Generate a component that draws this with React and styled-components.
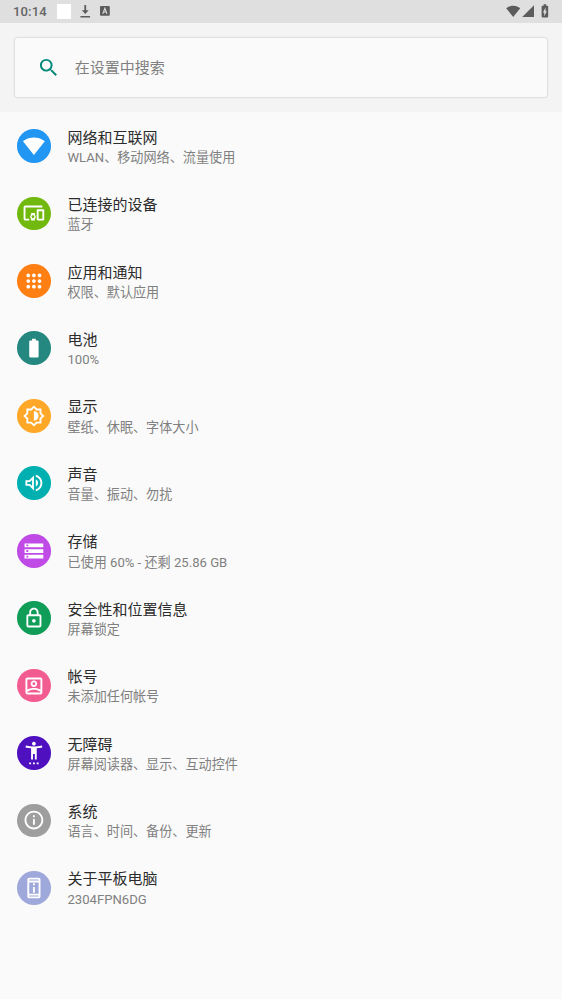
import React from "react";
import styled, { createGlobalStyle } from "styled-components";

const GlobalStyle = createGlobalStyle`
  * { box-sizing: border-box; }
  html, body { margin: 0; background: #fafafa; }
  body { font-family: Roboto, "Noto Sans CJK SC", sans-serif; overflow: hidden; }
`;

const Screen = styled.div`
  width: 562px;
  height: 999px;
  background: #fafafa;
  overflow: hidden;
`;

const StatusBar = styled.header`
  height: 22.5px;
  padding: 0 9.7px 0 13px;
  display: flex;
  align-items: center;
  justify-content: space-between;
  background: #dfdfdf;
  color: #5c5c5c;
`;

const StatusGroup = styled.div`
  display: flex;
  align-items: center;
  height: 100%;
`;

const Clock = styled.span`
  width: 44px;
  padding-top: 1px;
  font-size: 13.1px;
  font-weight: 500;
  line-height: 22px;
  letter-spacing: 0.1px;
  color: #666;
`;

const BlankNotice = styled.span`
  width: 14px;
  height: 14.5px;
  background: #fff;
`;

const Glyph = styled.svg`
  display: block;
  flex: none;
  width: ${(p) => p.$size}px;
  height: ${(p) => p.$size}px;
  margin-left: ${(p) => p.$gap || 0}px;
  fill: ${(p) => p.$color || "currentColor"};
`;

const SearchPanel = styled.div`
  height: 89.5px;
  padding: 15px 14.6px 14.5px 15px;
  background: #f4f4f4;
`;

const SearchCard = styled.div`
  height: 59.5px;
  padding-left: 21.8px;
  display: flex;
  align-items: center;
  gap: 14.6px;
  border-radius: 2px;
  background: #fafafa;
  box-shadow: 0 0 2px rgba(0, 0, 0, 0.3);
`;

const SearchHint = styled.span`
  padding-top: 1.4px;
  font-size: 15px;
  line-height: 22px;
  color: #808080;
`;

const List = styled.ul`
  list-style: none;
  margin: 0;
  padding: 0.3px 0 0;
`;

const Row = styled.li`
  height: 67.45px;
  padding-left: 16.9px;
  display: flex;
  align-items: center;
  gap: 16.8px;
`;

const Badge = styled.span`
  width: 33.75px;
  height: 33.75px;
  flex: none;
  display: flex;
  align-items: center;
  justify-content: center;
  border-radius: 50%;
  background: ${(p) => p.$color};
`;

const Labels = styled.div`
  display: flex;
  flex-direction: column;
  padding-top: 2.6px;
`;

const Title = styled.span`
  font-size: 15px;
  line-height: 20px;
  color: #2c2c2c;
`;

const Summary = styled.span`
  margin-top: 0.3px;
  font-size: 13.125px;
  line-height: 19px;
  color: #808080;
`;

const paths = {
  search: "M15.5 14h-.79l-.28-.27A6.471 6.471 0 0 0 16 9.5 6.5 6.5 0 1 0 9.5 16c1.61 0 3.09-.59 4.23-1.57l.27.28v.79l5 4.99L20.49 19l-4.99-5zm-6 0C7.01 14 5 11.99 5 9.5S7.01 5 9.5 5 14 7.01 14 9.5 11.99 14 9.5 14z",
  download: "M13.5 1.5h-3v9H6.3l5.7 6.2 5.7-6.2h-4.2zM4 20h16v2.3H4z",
  wifi: "M12.01 21.49 23.64 7c-.45-.34-4.93-4-11.64-4C5.28 3 .81 6.66.36 7l11.63 14.49.01.01.01-.01z",
  signal: "M2 22h20V2z",
  charging: "M15.67 4H14V2h-4v2H8.33C7.6 4 7 4.6 7 5.33v15.33C7 21.4 7.6 22 8.33 22h7.33c.74 0 1.34-.6 1.34-1.33V5.33C17 4.6 16.4 4 15.67 4zM11 20v-5.5H9L13 7v5.5h2L11 20z",
  devices: "M3 6h18V4H3c-1.1 0-2 .9-2 2v12c0 1.1.9 2 2 2h4v-2H3V6zm10 6H9v1.78c-.61.55-1 1.33-1 2.22s.39 1.67 1 2.22V20h4v-1.78c.61-.55 1-1.34 1-2.22s-.39-1.67-1-2.22V12zm-2 5.5c-.83 0-1.5-.67-1.5-1.5s.67-1.5 1.5-1.5 1.5.67 1.5 1.5-.67 1.5-1.5 1.5zM22 8h-6c-.5 0-1 .5-1 1v10c0 .5.5 1 1 1h6c.5 0 1-.5 1-1V9c0-.5-.5-1-1-1zm-1 10h-4v-8h4v8z",
  apps: "M6 8c1.1 0 2-.9 2-2s-.9-2-2-2-2 .9-2 2 .9 2 2 2zm6 12c1.1 0 2-.9 2-2s-.9-2-2-2-2 .9-2 2 .9 2 2 2zm-6 0c1.1 0 2-.9 2-2s-.9-2-2-2-2 .9-2 2 .9 2 2 2zm0-6c1.1 0 2-.9 2-2s-.9-2-2-2-2 .9-2 2 .9 2 2 2zm6 0c1.1 0 2-.9 2-2s-.9-2-2-2-2 .9-2 2 .9 2 2 2zm4-8c0 1.1.9 2 2 2s2-.9 2-2-.9-2-2-2-2 .9-2 2zm-4 2c1.1 0 2-.9 2-2s-.9-2-2-2-2 .9-2 2 .9 2 2 2zm6 6c1.1 0 2-.9 2-2s-.9-2-2-2-2 .9-2 2 .9 2 2 2zm0 6c1.1 0 2-.9 2-2s-.9-2-2-2-2 .9-2 2 .9 2 2 2z",
  battery: "M15.67 4H14V2h-4v2H8.33C7.6 4 7 4.6 7 5.33v15.33C7 21.4 7.6 22 8.33 22h7.33c.74 0 1.34-.6 1.34-1.33V5.33C17 4.6 16.4 4 15.67 4z",
  display: "M20 8.69V4h-4.69L12 .69 8.69 4H4v4.69L.69 12 4 15.31V20h4.69L12 23.31 15.31 20H20v-4.69L23.31 12 20 8.69zm-2 5.79V18h-3.52L12 20.48 9.52 18H6v-3.52L3.52 12 6 9.52V6h3.52L12 3.52 14.48 6H18v3.52L20.48 12 18 14.48zM12 7v10c2.76 0 5-2.24 5-5s-2.24-5-5-5z",
  sound: "M3 9v6h4l5 5V4L7 9H3zm7-.17v6.34L7.83 13H5v-2h2.83L10 8.83zM16.5 12A4.5 4.5 0 0 0 14 7.97v8.05A4.47 4.47 0 0 0 16.5 12zM14 3.23v2.06c2.89.86 5 3.54 5 6.71s-2.11 5.85-5 6.71v2.06c4.01-.91 7-4.49 7-8.77s-2.99-7.86-7-8.77z",
  storage: "M2 20h20v-4H2v4zm2-3h2v2H4v-2zM2 4v4h20V4H2zm4 3H4V5h2v2zm-4 7h20v-4H2v4zm2-3h2v2H4v-2z",
  lock: "M18 8h-1V6c0-2.76-2.24-5-5-5S7 3.24 7 6v2H6c-1.1 0-2 .9-2 2v10c0 1.1.9 2 2 2h12c1.1 0 2-.9 2-2V10c0-1.1-.9-2-2-2zM9 6c0-1.66 1.34-3 3-3s3 1.34 3 3v2H9V6zm9 14H6V10h12v10zm-6-3c1.1 0 2-.9 2-2s-.9-2-2-2-2 .9-2 2 .9 2 2 2z",
  account: "M19 3H5c-1.1 0-2 .9-2 2v14c0 1.1.9 2 2 2h14c1.1 0 2-.9 2-2V5c0-1.1-.9-2-2-2zm0 2v10.79C16.52 14.37 13.23 14 12 14s-4.52.37-7 1.79V5h14zM5 19v-.77C6.74 16.66 10.32 16 12 16s5.26.66 7 2.23V19H5zm7-6c1.94 0 3.5-1.56 3.5-3.5S13.94 6 12 6 8.5 7.56 8.5 9.5 10.06 13 12 13zm0-5c.83 0 1.5.67 1.5 1.5S12.83 11 12 11s-1.5-.67-1.5-1.5S11.17 8 12 8z",
  accessibility: "M20.5 4c-2.61.7-5.67 1-8.5 1s-5.89-.3-8.5-1L3 6c1.86.5 4 .83 6 1v12h2v-6h2v6h2V7c2-.17 4.14-.5 6-1l-.5-2zM12 4c1.1 0 2-.9 2-2s-.9-2-2-2-2 .9-2 2 .9 2 2 2zM7 24h2v-2H7v2zm4 0h2v-2h-2v2zm4 0h2v-2h-2v2z",
  info: "M11 7h2v2h-2V7zm0 4h2v6h-2v-6zm1-9C6.48 2 2 6.48 2 12s4.48 10 10 10 10-4.48 10-10S17.52 2 12 2zm0 18c-4.41 0-8-3.59-8-8s3.59-8 8-8 8 3.59 8 8-3.59 8-8 8z",
  tablet: "M11 7h2v2h-2zm0 4h2v6h-2zM17 1H7c-1.1 0-2 .9-2 2v18c0 1.1.9 2 2 2h10c1.1 0 2-.9 2-2V3c0-1.1-.9-2-2-2zm0 20H7v-1h10v1zm0-3H7V6h10v12zm0-14H7V3h10v1z",
};

const items = [
  ["wifi", "#2196f3", "网络和互联网", "WLAN、移动网络、流量使用"],
  ["devices", "#71b80f", "已连接的设备", "蓝牙"],
  ["apps", "#ff7f13", "应用和通知", "权限、默认应用"],
  ["battery", "#248880", "电池", "100%"],
  ["display", "#ffa828", "显示", "壁纸、休眠、字体大小"],
  ["sound", "#00b0b0", "声音", "音量、振动、勿扰"],
  ["storage", "#c04ae6", "存储", "已使用 60% - 还剩 25.86 GB"],
  ["lock", "#109d58", "安全性和位置信息", "屏幕锁定"],
  ["account", "#f25c91", "帐号", "未添加任何帐号"],
  ["accessibility", "#4f10c0", "无障碍", "屏幕阅读器、显示、互动控件"],
  ["info", "#9e9e9e", "系统", "语言、时间、备份、更新"],
  ["tablet", "#9fa8da", "关于平板电脑", "2304FPN6DG"],
];

function Icon({ name, size, gap, color, viewBox = "0 0 24 24" }) {
  return (
    <Glyph viewBox={viewBox} $size={size} $gap={gap} $color={color} aria-hidden="true">
      <path fillRule="evenodd" d={paths[name]} />
    </Glyph>
  );
}

function KeyboardIcon() {
  return (
    <Glyph viewBox="0 0 10 10" $size={9.8} $gap={8.2} aria-hidden="true">
      <rect width="10" height="10" rx="1" />
      <path d="M2.8 8 5 2.3 7.2 8M3.6 6.2h2.8" fill="none" stroke="#dfdfdf" strokeWidth="1.1" />
    </Glyph>
  );
}

export default function App() {
  return (
    <Screen>
      <GlobalStyle />
      <StatusBar>
        <StatusGroup>
          <Clock>10:14</Clock>
          <BlankNotice />
          <Icon name="download" size={14.5} gap={6.6} />
          <KeyboardIcon />
        </StatusGroup>
        <StatusGroup>
          <Icon name="wifi" size={14.4} />
          <Icon name="signal" size={14.2} gap={0.9} />
          <Icon name="charging" size={15.8} gap={1.3} />
        </StatusGroup>
      </StatusBar>
      <SearchPanel>
        <SearchCard>
          <Icon name="search" size={23.4} color="#00897b" />
          <SearchHint>在设置中搜索</SearchHint>
        </SearchCard>
      </SearchPanel>
      <List>
        {items.map(([icon, color, title, summary]) => (
          <Row key={icon}>
            <Badge $color={color}>
              <Icon name={icon} size={24} color="#fff" viewBox="-0.7 -0.8 25.6 25.6" />
            </Badge>
            <Labels>
              <Title>{title}</Title>
              <Summary>{summary}</Summary>
            </Labels>
          </Row>
        ))}
      </List>
    </Screen>
  );
}
